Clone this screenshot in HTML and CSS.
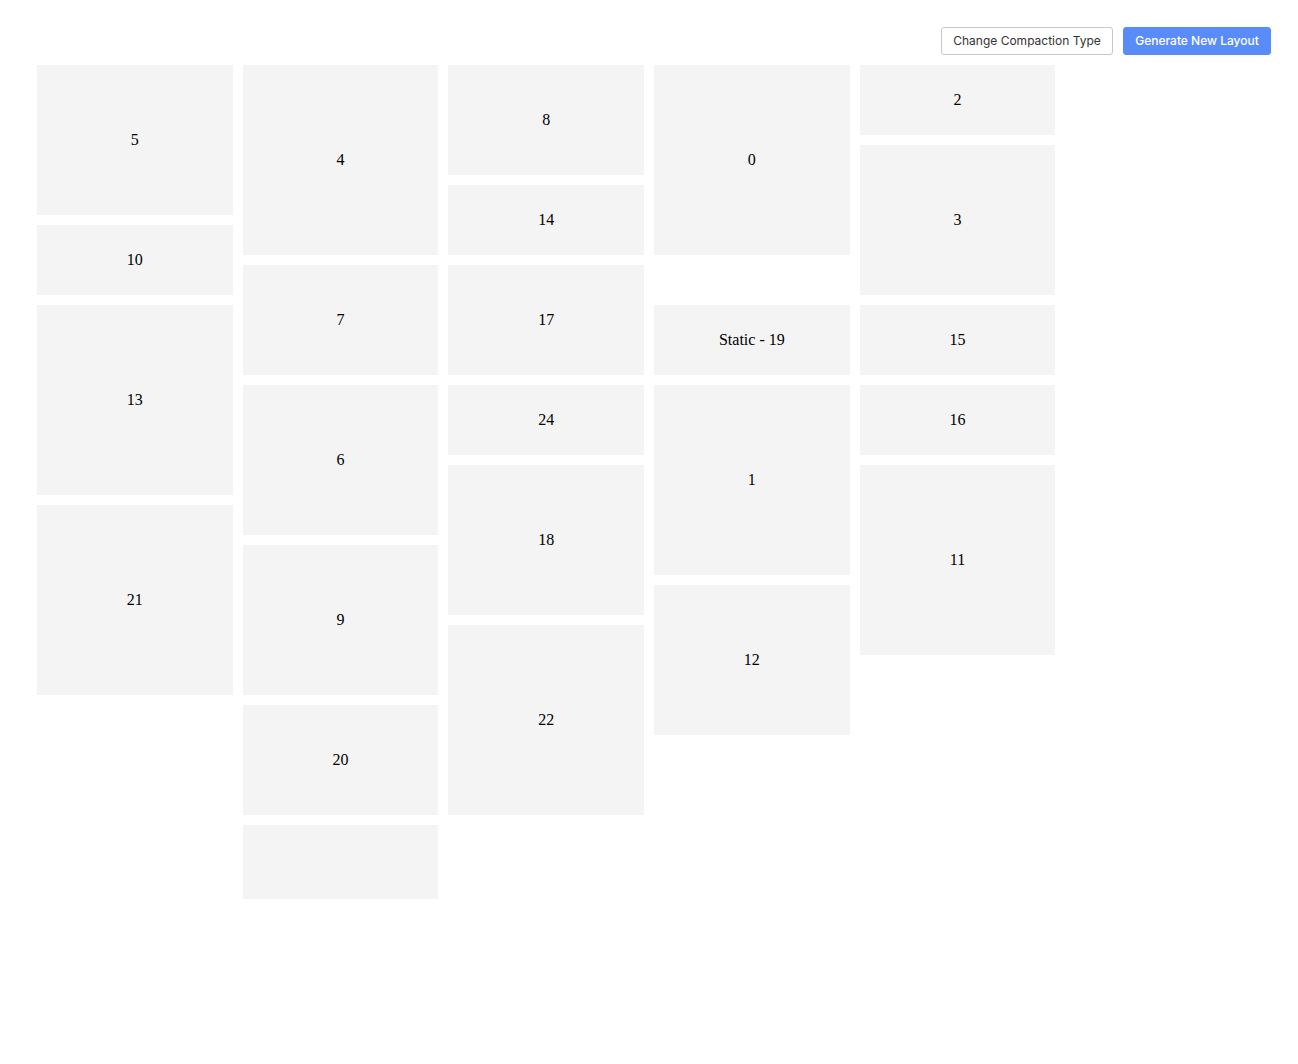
FILE: index.html
```html
<!DOCTYPE html>
<html lang="en">
<head>
<meta charset="utf-8">
<title>Grid Layout</title>
<link rel="stylesheet" href="styles.css">
</head>
<body>
<div class="page">
  <div class="toolbar">
    <button class="btn btn-outline">Change Compaction Type</button>
    <button class="btn btn-primary">Generate New Layout</button>
  </div>
  <div class="grid">
    <div class="item" style="grid-column: 1 / span 2; grid-row: 1 / span 4;"><span>5</span></div>
    <div class="item" style="grid-column: 1 / span 2; grid-row: 5 / span 2;"><span>10</span></div>
    <div class="item" style="grid-column: 1 / span 2; grid-row: 7 / span 5;"><span>13</span></div>
    <div class="item" style="grid-column: 1 / span 2; grid-row: 12 / span 5;"><span>21</span></div>

    <div class="item" style="grid-column: 3 / span 2; grid-row: 1 / span 5;"><span>4</span></div>
    <div class="item" style="grid-column: 3 / span 2; grid-row: 6 / span 3;"><span>7</span></div>
    <div class="item" style="grid-column: 3 / span 2; grid-row: 9 / span 4;"><span>6</span></div>
    <div class="item" style="grid-column: 3 / span 2; grid-row: 13 / span 4;"><span>9</span></div>
    <div class="item" style="grid-column: 3 / span 2; grid-row: 17 / span 3;"><span>20</span></div>
    <div class="item item-last" style="grid-column: 3 / span 2; grid-row: 20 / span 2;"></div>

    <div class="item" style="grid-column: 5 / span 2; grid-row: 1 / span 3;"><span>8</span></div>
    <div class="item" style="grid-column: 5 / span 2; grid-row: 4 / span 2;"><span>14</span></div>
    <div class="item" style="grid-column: 5 / span 2; grid-row: 6 / span 3;"><span>17</span></div>
    <div class="item" style="grid-column: 5 / span 2; grid-row: 9 / span 2;"><span>24</span></div>
    <div class="item" style="grid-column: 5 / span 2; grid-row: 11 / span 4;"><span>18</span></div>
    <div class="item" style="grid-column: 5 / span 2; grid-row: 15 / span 5;"><span>22</span></div>

    <div class="item" style="grid-column: 7 / span 2; grid-row: 1 / span 5;"><span>0</span></div>
    <div class="item" style="grid-column: 7 / span 2; grid-row: 7 / span 2;"><span>Static - 19</span></div>
    <div class="item" style="grid-column: 7 / span 2; grid-row: 9 / span 5;"><span>1</span></div>
    <div class="item" style="grid-column: 7 / span 2; grid-row: 14 / span 4;"><span>12</span></div>

    <div class="item" style="grid-column: 9 / span 2; grid-row: 1 / span 2;"><span>2</span></div>
    <div class="item" style="grid-column: 9 / span 2; grid-row: 3 / span 4;"><span>3</span></div>
    <div class="item" style="grid-column: 9 / span 2; grid-row: 7 / span 2;"><span>15</span></div>
    <div class="item" style="grid-column: 9 / span 2; grid-row: 9 / span 2;"><span>16</span></div>
    <div class="item" style="grid-column: 9 / span 2; grid-row: 11 / span 5;"><span>11</span></div>
  </div>
</div>
</body>
</html>
```
FILE: styles.css
```css
html, body {
  margin: 0;
  padding: 0;
  background: #ffffff;
}

.page {
  padding: 27px 27px 0 27px;
}

.toolbar {
  display: flex;
  justify-content: flex-end;
  gap: 10px;
}

.btn {
  height: 28px;
  padding: 0;
  border-radius: 3px;
  font-family: Inter, "Open Sans", "Liberation Sans", sans-serif;
  font-size: 12px;
  line-height: 26px;
  white-space: nowrap;
  text-align: center;
  cursor: pointer;
  box-sizing: border-box;
}

.btn-outline {
  background: #ffffff;
  border: 1px solid #c8c8c8;
  color: #333333;
  width: 172px;
}

.btn-primary {
  background: #5a8cf9;
  border: 1px solid #5a8cf9;
  color: #ffffff;
  font-weight: 500;
  width: 148px;
}

.grid {
  display: grid;
  grid-template-columns: repeat(12, 1fr);
  grid-auto-rows: 30px;
  column-gap: 10px;
  row-gap: 10px;
  padding: 10px;
}

.item {
  background: #f4f4f4;
  display: flex;
  align-items: center;
  justify-content: center;
  font-family: "Liberation Serif", "Times New Roman", serif;
  font-size: 16px;
  color: #000000;
}

.item-last {
  height: 74px;
  align-self: start;
}
```
